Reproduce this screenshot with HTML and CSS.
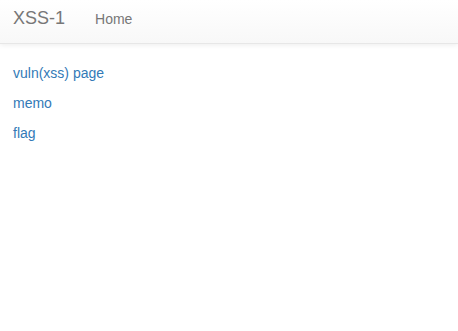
FILE: index.html
```html
<!DOCTYPE html>
<html lang="en">
<head>
    <meta charset="UTF-8">
    <meta name="viewport" content="width=device-width, initial-scale=1.0">
    <title>XSS-1</title>
    <link rel="stylesheet" href="styles.css">
</head>
<body>
    <nav class="navbar">
        <a href="#" class="brand">XSS-1</a>
        <ul class="nav-links">
            <li><a href="#">Home</a></li>
        </ul>
    </nav>

    <div class="container">
        <p><a href="#">vuln(xss) page</a></p>
        <p><a href="#">memo</a></p>
        <p><a href="#">flag</a></p>
    </div>
</body>
</html>
```

FILE: styles.css
```css
* {
    margin: 0;
    padding: 0;
    box-sizing: border-box;
}

body {
    font-family: 'Liberation Sans', Arial, sans-serif;
    font-size: 14px;
    line-height: 20px;
    color: #333;
    background: #fff;
}

a {
    text-decoration: none;
}

.navbar {
    display: flex;
    align-items: baseline;
    height: 44px;
    padding: 8px 13px 0;
    background: linear-gradient(to bottom, #fff 0%, #f8f8f8 100%);
    border-bottom: 1px solid #e7e7e7;
    box-shadow: 0 1px 5px rgba(0, 0, 0, 0.075);
    margin-bottom: 19px;
}

.brand {
    font-size: 18px;
    color: #777;
    margin-right: 30px;
}

.nav-links {
    list-style: none;
    display: flex;
}

.nav-links a {
    color: #777;
}

.container {
    padding: 0 13px;
}

.container p {
    margin-bottom: 10px;
}

.container a {
    color: #337ab7;
}
```
